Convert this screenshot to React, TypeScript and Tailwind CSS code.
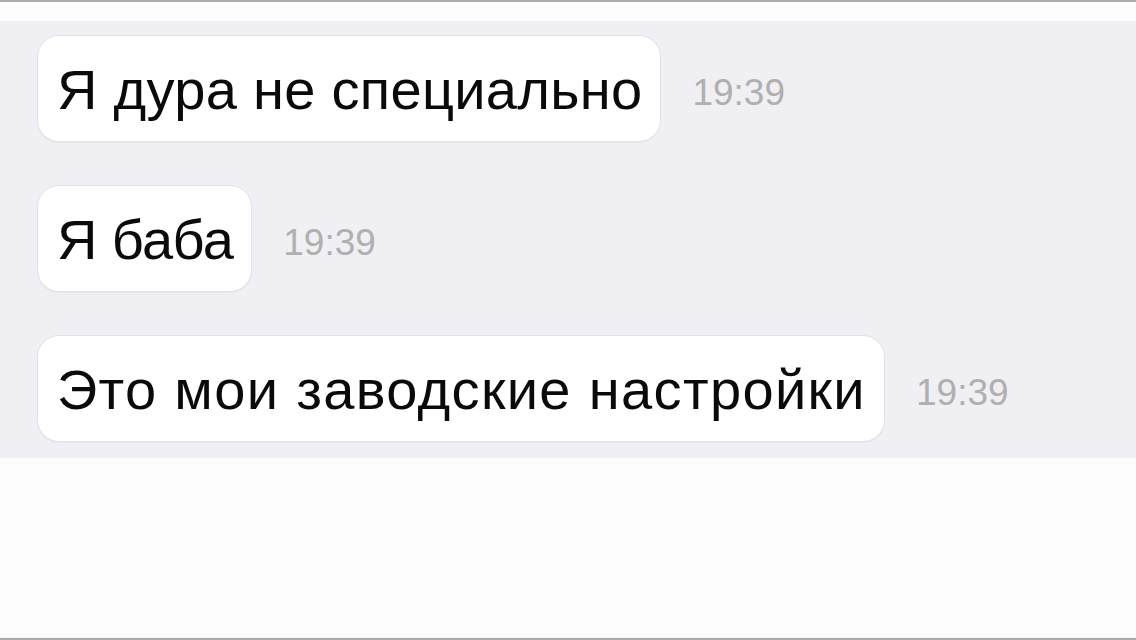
import React from 'react';

interface Message {
  id: number;
  text: string;
  time: string;
  tracking: string;
}

const messages: Message[] = [
  { id: 1, text: 'Я дура не специально', time: '19:39', tracking: 'tracking-[0.3px]' },
  { id: 2, text: 'Я баба', time: '19:39', tracking: 'tracking-[-0.6px]' },
  { id: 3, text: 'Это мои заводские настройки', time: '19:39', tracking: 'tracking-[1.35px]' },
];

const App: React.FC = () => {
  return (
    <div className="w-[1136px] h-[640px] flex flex-col bg-[#fdfdfd] font-['Liberation_Sans',Arial,sans-serif]">
      <div className="h-[2px] bg-[#acacac]" />
      <div className="h-[19px] bg-[#fdfdfd]" />
      {/* chat area */}
      <div className="bg-[#efeff4] pt-[14px] pb-[16px] pl-[37px] flex flex-col gap-[43px]">
        {messages.map(msg => (
          <div key={msg.id} className="flex items-center">
            <div className="h-[107px] flex items-center pl-[19px] pr-[18px] bg-white border border-[#e2e2e8] rounded-[22px] shadow-[0_1px_1px_rgba(0,0,0,0.04)]">
              <span className={`text-[56px] leading-[64px] mt-[3px] text-[#0a0a0a] whitespace-nowrap ${msg.tracking}`}>{msg.text}</span>
            </div>
            <span className="ml-[31px] mt-[8px] text-[37px] leading-none text-[#b0b0b0]">{msg.time}</span>
          </div>
        ))}
      </div>
      <div className="flex-1 bg-[#fdfdfd]" />
      <div className="h-[1px] bg-[#f3f3f3]" />
      <div className="h-[2px] bg-[#acacac]" />
    </div>
  );
};

export default App;
